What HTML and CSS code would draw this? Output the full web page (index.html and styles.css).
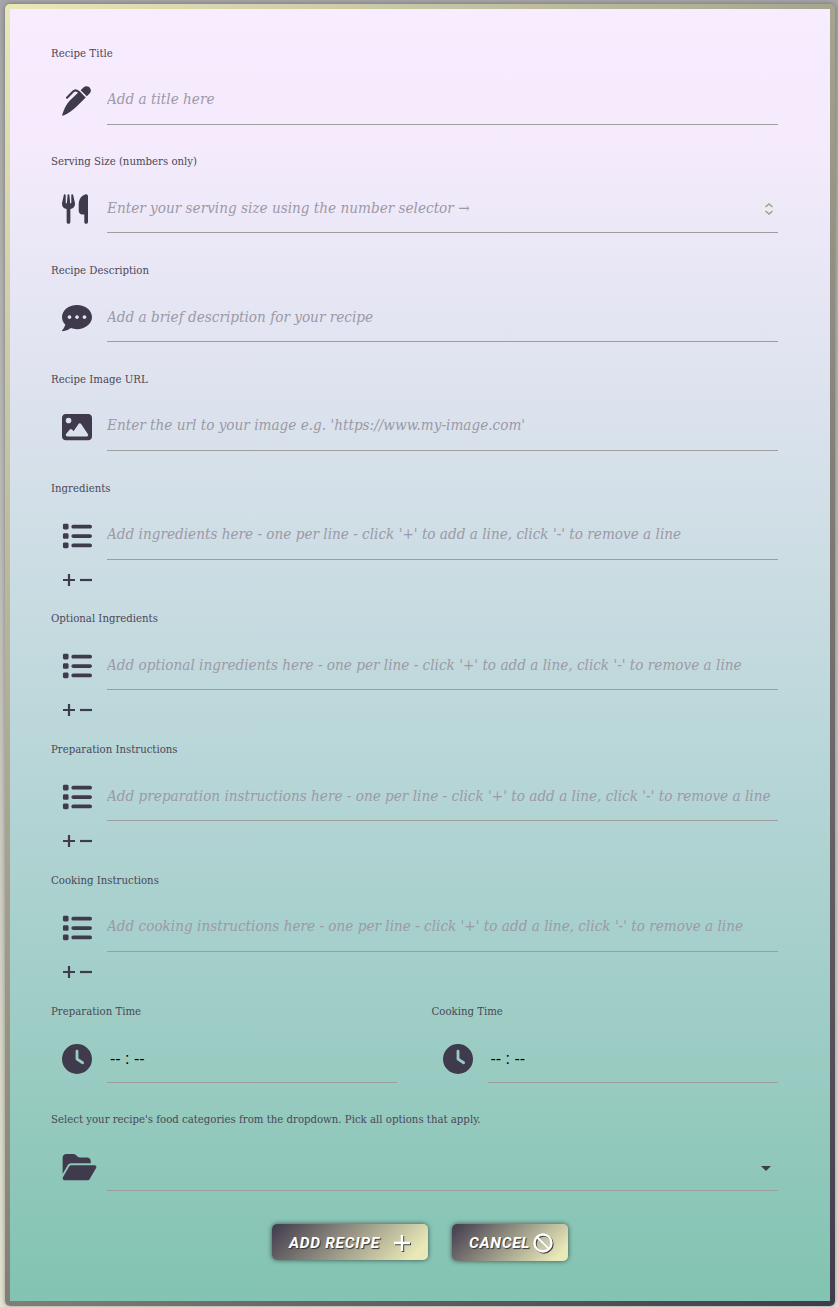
FILE: index.html
```html
<!DOCTYPE html>
<html lang="en">
<head>
    <meta charset="UTF-8">
    <meta name="viewport" content="width=device-width, initial-scale=1.0">
    <title>Add Recipe</title>
    <link rel="stylesheet" href="styles.css">
</head>
<body>
    <svg class="icon-defs" width="0" height="0">
        <symbol id="i-list" viewBox="0 0 512 512"><path d="M40 48C26.700 48 16 58.700 16 72v48c0 13.300 10.700 24 24 24h48c13.300 0 24-10.700 24-24V72c0-13.300-10.700-24-24-24H40zM192 64c-17.700 0-32 14.300-32 32s14.300 32 32 32h288c17.700 0 32-14.300 32-32s-14.300-32-32-32H192zm0 160c-17.700 0-32 14.300-32 32s14.300 32 32 32h288c17.700 0 32-14.300 32-32s-14.300-32-32-32H192zm0 160c-17.700 0-32 14.300-32 32s14.300 32 32 32h288c17.700 0 32-14.300 32-32s-14.300-32-32-32H192zM16 232v48c0 13.300 10.700 24 24 24h48c13.300 0 24-10.700 24-24v-48c0-13.300-10.700-24-24-24H40c-13.300 0-24 10.700-24 24zm24 136c-13.300 0-24 10.700-24 24v48c0 13.300 10.700 24 24 24h48c13.300 0 24-10.700 24-24v-48c0-13.300-10.700-24-24-24H40z"/></symbol>
        <symbol id="i-clock" viewBox="0 0 512 512"><path d="M256 0a256 256 0 1 1 0 512A256 256 0 1 1 256 0zM232 120v136c0 8 4 15.500 10.700 20l96 64c11 7.400 25.900 4.400 33.300-6.700s4.400-25.900-6.700-33.300L280 243.200V120c0-13.300-10.700-24-24-24s-24 10.700-24 24z"/></symbol>
    </svg>

    <form class="recipe-form">
        <div class="field">
            <label class="field-label">Recipe Title</label>
            <div class="field-row">
                <svg class="field-icon" viewBox="0 0 512 512">
                    <path d="M318 72 366 24A74 74 0 0 1 471 129L423 177zM300 90 405 195 250 350C190 410 110 470 25 505 8 512-2 502 5 485 35 400 70 310 130 250z"/>
                    <path class="pen-clip" d="M85 200 190 95C215 70 250 70 275 95L300 120"/>
                </svg>
                <input class="field-input" type="text" placeholder="Add a title here">
            </div>
        </div>

        <div class="field">
            <label class="field-label">Serving Size (numbers only)</label>
            <div class="field-row">
                <svg class="field-icon utensils-icon" viewBox="0 0 448 512"><path d="M416 0C400 0 288 32 288 176V288c0 35.300 28.700 64 64 64h32V480c0 17.700 14.300 32 32 32s32-14.300 32-32V352 240 32c0-17.700-14.300-32-32-32zM64 16C64 7.800 57.900 1 49.700 .1S34.200 4.600 32.400 12.500L2.100 148.800C.7 155.100 0 161.500 0 167.900c0 45.900 35.100 83.600 80 87.700V480c0 17.700 14.300 32 32 32s32-14.300 32-32V255.600c44.900-4.100 80-41.800 80-87.700c0-6.400-.7-12.800-2.100-19.100L191.600 12.500c-1.800-8-9.300-13.300-17.400-12.400S160 7.800 160 16V150.200c0 5.400-4.400 9.800-9.800 9.800c-5.100 0-9.300-3.900-9.800-9L127.900 14.600C127.200 6.300 120.300 0 112 0s-15.200 6.300-15.900 14.600L83.700 151c-.5 5.100-4.700 9-9.800 9c-5.400 0-9.800-4.400-9.800-9.800V16z"/></svg>
                <div class="number-wrap">
                    <input class="field-input" type="text" placeholder="Enter your serving size using the number selector &#8594;">
                    <span class="spinner">
                        <svg viewBox="0 0 10 14"><path d="M1.500 5 5 2l3.500 3M1.500 9 5 12l3.500-3"/></svg>
                    </span>
                </div>
            </div>
        </div>

        <div class="field">
            <label class="field-label">Recipe Description</label>
            <div class="field-row">
                <svg class="field-icon" viewBox="0 0 512 512"><path d="M256 32C114.600 32 0 125.100 0 240c0 49.600 21.400 95 57 130.700C44.500 421.100 2.700 466 2.200 466.500c-2.200 2.300-2.800 5.700-1.500 8.700S4.800 480 8 480c66.300 0 116-31.800 140.600-51.400 32.700 12.300 69 19.400 107.400 19.400 141.400 0 256-93.100 256-208S397.400 32 256 32zM128 272c-17.700 0-32-14.300-32-32s14.300-32 32-32 32 14.300 32 32-14.300 32-32 32zm128 0c-17.700 0-32-14.300-32-32s14.300-32 32-32 32 14.300 32 32-14.300 32-32 32zm128 0c-17.700 0-32-14.300-32-32s14.300-32 32-32 32 14.300 32 32-14.300 32-32 32z"/></svg>
                <input class="field-input" type="text" placeholder="Add a brief description for your recipe">
            </div>
        </div>

        <div class="field">
            <label class="field-label">Recipe Image URL</label>
            <div class="field-row">
                <svg class="field-icon" viewBox="0 0 512 512"><path d="M0 96C0 60.700 28.700 32 64 32h384c35.300 0 64 28.700 64 64v320c0 35.300-28.700 64-64 64H64c-35.300 0-64-28.700-64-64V96zm323.800 106.500c-4.500-6.600-11.900-10.500-19.800-10.500s-15.400 3.900-19.800 10.500l-87 127.600-26.500-33.100c-4.600-5.700-11.500-9-18.700-9s-14.200 3.300-18.700 9l-64 80c-5.800 7.200-6.900 17.100-2.900 25.400S79.800 416 89 416h334c8.900 0 17.100-4.900 21.200-12.800s3.600-17.400-1.400-24.700l-119-176zM112 192a48 48 0 1 0 0-96 48 48 0 1 0 0 96z"/></svg>
                <input class="field-input" type="text" placeholder="Enter the url to your image e.g. 'https://www.my-image.com'">
            </div>
        </div>

        <div class="field field-list">
            <label class="field-label">Ingredients</label>
            <div class="field-row">
                <svg class="field-icon"><use href="#i-list"/></svg>
                <input class="field-input" type="text" placeholder="Add ingredients here - one per line - click '+' to add a line, click '-' to remove a line">
            </div>
            <div class="line-buttons">
                <svg viewBox="0 0 14 14"><path d="M7 1v12M1 7h12"/></svg>
                <svg viewBox="0 0 14 14"><path d="M1 7h12"/></svg>
            </div>
        </div>

        <div class="field field-list">
            <label class="field-label">Optional Ingredients</label>
            <div class="field-row">
                <svg class="field-icon"><use href="#i-list"/></svg>
                <input class="field-input" type="text" placeholder="Add optional ingredients here - one per line - click '+' to add a line, click '-' to remove a line">
            </div>
            <div class="line-buttons">
                <svg viewBox="0 0 14 14"><path d="M7 1v12M1 7h12"/></svg>
                <svg viewBox="0 0 14 14"><path d="M1 7h12"/></svg>
            </div>
        </div>

        <div class="field field-list">
            <label class="field-label">Preparation Instructions</label>
            <div class="field-row">
                <svg class="field-icon"><use href="#i-list"/></svg>
                <input class="field-input" type="text" placeholder="Add preparation instructions here - one per line - click '+' to add a line, click '-' to remove a line">
            </div>
            <div class="line-buttons">
                <svg viewBox="0 0 14 14"><path d="M7 1v12M1 7h12"/></svg>
                <svg viewBox="0 0 14 14"><path d="M1 7h12"/></svg>
            </div>
        </div>

        <div class="field field-list">
            <label class="field-label">Cooking Instructions</label>
            <div class="field-row">
                <svg class="field-icon"><use href="#i-list"/></svg>
                <input class="field-input" type="text" placeholder="Add cooking instructions here - one per line - click '+' to add a line, click '-' to remove a line">
            </div>
            <div class="line-buttons">
                <svg viewBox="0 0 14 14"><path d="M7 1v12M1 7h12"/></svg>
                <svg viewBox="0 0 14 14"><path d="M1 7h12"/></svg>
            </div>
        </div>

        <div class="time-fields">
            <div class="field">
                <label class="field-label">Preparation Time</label>
                <div class="field-row">
                    <svg class="field-icon"><use href="#i-clock"/></svg>
                    <div class="field-input time-value">-- : --</div>
                </div>
            </div>
            <div class="field">
                <label class="field-label">Cooking Time</label>
                <div class="field-row">
                    <svg class="field-icon"><use href="#i-clock"/></svg>
                    <div class="field-input time-value">-- : --</div>
                </div>
            </div>
        </div>

        <div class="field">
            <label class="field-label">Select your recipe's food categories from the dropdown. Pick all options that apply.</label>
            <div class="field-row">
                <svg class="field-icon folder-icon" viewBox="0 0 576 512"><path d="M88.700 223.800L0 375.800V96C0 60.700 28.700 32 64 32H181.500c17 0 33.300 6.700 45.300 18.700l26.500 26.500c12 12 28.300 18.700 45.300 18.700H416c35.300 0 64 28.700 64 64v32H144c-22.800 0-43.800 12.100-55.300 31.800zm27.600 16.100C122.100 230 132.600 224 144 224H544c11.500 0 22 6.100 27.700 16.100s5.700 22.200-.1 32.100l-112 192C453.900 474 443.400 480 432 480H32c-11.500 0-22-6.100-27.700-16.100s-5.700-22.200 .1-32.100l112-192z"/></svg>
                <div class="field-input select-box"><span class="select-caret"></span></div>
            </div>
        </div>

        <div class="form-actions">
            <button class="btn btn-add" type="button">ADD RECIPE
                <svg viewBox="0 0 20 20"><path d="M10 2v16M2 10h16"/></svg>
            </button>
            <button class="btn btn-cancel" type="button">CANCEL
                <svg viewBox="0 0 20 20"><circle cx="10" cy="10" r="8.500"/><path d="M4 4l12 12"/></svg>
            </button>
        </div>
    </form>
</body>
</html>
```
FILE: styles.css
```css
* {
    box-sizing: border-box;
}

html, body {
    margin: 0;
    padding: 0;
}

body {
    width: 838px;
    height: 1307px;
    overflow: hidden;
    background: linear-gradient(180deg, #a6a6a8 0%, #bdbdb8 40%, #e4e4d4 100%);
    padding: 4px 3px 1px 5px;
    font-family: "DejaVu Serif Condensed", serif;
}

.icon-defs {
    position: absolute;
}

.recipe-form {
    height: 1302px;
    width: 830px;
    border: 5px solid transparent;
    border-radius: 5px;
    background: linear-gradient(180deg, #f8ecff 0%, #f5ebfd 10%, #d5e0e9 36%, #b8d6d8 58%, #82c3b1 100%) padding-box,
        linear-gradient(135deg, #e8e8b8, #403a4d) border-box;
    box-shadow: 0 0 5px rgba(0, 0, 0, 0.35);
    padding: 37.700px 52px 0 41px;
}

.field {
    height: 108.750px;
}

.field-list {
    height: 130.750px;
}

.field-label {
    display: block;
    font-size: 11.300px;
    line-height: 14px;
    color: #4b4757;
}

.field-row {
    display: grid;
    grid-template-columns: 56px 1fr;
    align-items: center;
    margin-top: 16px;
    height: 48px;
}

.field-icon {
    width: 30px;
    height: 30px;
    margin-left: 11px;
    fill: #403a4d;
}

.pen-clip {
    fill: none;
    stroke: #403a4d;
    stroke-width: 36;
    stroke-linecap: round;
}

.utensils-icon {
    width: 26px;
}

.folder-icon {
    width: 35px;
}

.field-input {
    min-width: 0;
    width: 100%;
    height: 48px;
    border: none;
    border-bottom: 1px solid #9e9e9e;
    background: transparent;
    outline: none;
    padding: 0 0 2px;
    font-family: "DejaVu Serif Condensed", serif;
    font-size: 15.150px;
}

.field-input::placeholder {
    font-style: italic;
    color: #9c99a6;
    opacity: 1;
}

.number-wrap {
    position: relative;
}

.spinner {
    position: absolute;
    right: 0;
    top: 15px;
    width: 18px;
    height: 18px;
    border-radius: 3px;
    background-color: #ebebf0;
    display: flex;
    align-items: center;
    justify-content: center;
}

.spinner svg {
    width: 10px;
    height: 14px;
    fill: none;
    stroke: #9d9ba8;
    stroke-width: 1.500;
}

.line-buttons {
    display: flex;
    gap: 3px;
    margin: 13px 0 0 11px;
}

.line-buttons svg {
    width: 14px;
    height: 14px;
    fill: none;
    stroke: #403a4d;
    stroke-width: 2.200;
}

.time-fields {
    display: grid;
    grid-template-columns: 346px 346.500px;
    column-gap: 34.500px;
}

.time-value {
    display: flex;
    align-items: center;
    padding: 2px 0 0 3px;
    color: #000;
    font-family: "Liberation Sans", sans-serif;
    font-size: 16px;
}

.select-box {
    position: relative;
}

.select-caret {
    position: absolute;
    right: 7px;
    top: 23px;
    border-left: 5px solid transparent;
    border-right: 5px solid transparent;
    border-top: 5px solid #403a4d;
}

.form-actions {
    display: flex;
    justify-content: center;
    align-items: flex-start;
    gap: 24px;
    margin-top: 2px;
    padding-left: 11px;
}

.btn {
    display: flex;
    align-items: center;
    height: 36px;
    border: none;
    border-radius: 5px;
    background: linear-gradient(135deg, #403a4d, #e8e8b8 90%);
    box-shadow: 0 0 5px rgba(0, 0, 0, 0.6);
    color: #fff;
    font-family: Roboto, sans-serif;
    font-size: 15.500px;
    font-weight: 700;
    font-style: italic;
    letter-spacing: 0.700px;
    text-shadow: 1px 1px 1px #333;
    padding: 1px 0 0 17px;
}

.btn svg {
    width: 20px;
    height: 20px;
    fill: none;
    stroke: #fff;
    stroke-width: 2.400;
    filter: drop-shadow(1px 1px 0 #444);
}

.btn-add {
    width: 156px;
    gap: 12px;
}

.btn-cancel {
    width: 116px;
    height: 37px;
    gap: 3px;
}
```
